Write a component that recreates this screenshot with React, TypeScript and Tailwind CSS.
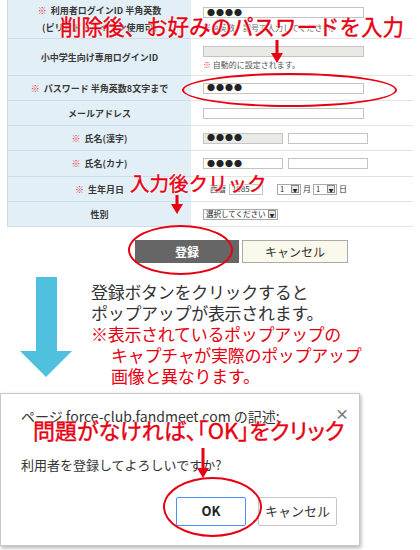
const red = "text-[#e60012]";

function Dots() {
  return <span className="pl-[3px] text-[8px] leading-none tracking-[1px] text-[#222]">●●●●</span>;
}

function Field({ w, filled, gray, children }: { w: string; filled?: boolean; gray?: boolean; children?: React.ReactNode }) {
  return (
    <div
      className={`${w} flex h-[11px] items-center border border-[#c4c4c4] ${gray ? "bg-[#e9e9e6]" : "bg-white"}`}
    >
      {filled ? <Dots /> : children}
    </div>
  );
}

function Select({ label, w }: { label: string; w: string }) {
  return (
    <div className={`${w} flex h-[11px] items-center justify-between overflow-hidden whitespace-nowrap border border-[#a8a8a8] bg-white pl-[2px] text-[7.5px] leading-none text-[#222]`}>
      <span>{label}</span>
      <span className="mr-[1px] flex h-[8px] w-[8px] shrink-0 items-center justify-center border border-[#888] bg-[#e6e6e6] text-[5px]">▼</span>
    </div>
  );
}

function Label({ req, children, h }: { req?: boolean; children: React.ReactNode; h: string }) {
  return (
    <div className={`${h} flex items-center justify-center border-b border-[#cadde8] bg-[#e2eff6] text-center text-[9px] font-bold leading-[17px] text-[#3a3a3a]`}>
      <div>
        {req && <span className="mr-[4px] text-[#ec3348]">※</span>}
        {children}
      </div>
    </div>
  );
}

function Cell({ h, children }: { h: string; children?: React.ReactNode }) {
  return <div className={`${h} flex flex-col justify-center border-b border-[#e3e3e3] bg-white pl-[12px]`}>{children}</div>;
}

function Ellipse({ className }: { className: string }) {
  return <div className={`pointer-events-none absolute rounded-[50%] border-2 border-[#e60012] ${className}`} />;
}

function RedArrow({ className, len }: { className: string; len: number }) {
  return (
    <svg className={`pointer-events-none absolute ${className}`} width="12" height={len} viewBox={`0 0 12 ${len}`}>
      <rect x="4.5" y="0" width="3" height={len - 8} fill="#e60012" />
      <polygon points={`0,${len - 10} 12,${len - 10} 6,${len}`} fill="#e60012" />
    </svg>
  );
}

const note =
  "pointer-events-none absolute whitespace-nowrap leading-none text-[#e60012] [-webkit-text-stroke:0.4px_#e60012] [text-shadow:0_0_2px_#fff,0_0_2px_#fff,0_0_3px_#fff]";

export default function App() {
  return (
    <div className="relative h-[550px] w-[420px] overflow-hidden bg-white font-['Noto_Sans_CJK_JP',sans-serif]">
      {/* form table */}
      <div className="ml-[7px] grid w-[405px] grid-cols-[183px_222px] border-x border-[#d6d6d6]">
        <Label h="h-[39px]" req>
          利用者ログインID 半角英数
          <br />
          (ピリオド・ハイフン使用可)
        </Label>
        <Cell h="h-[39px] !justify-start pt-[7px]">
          <Field w="w-[161px]" filled />
          <div className="mt-[6px] text-[8px] leading-none text-[#666]">半角英数・記号で入力してください。</div>
        </Cell>

        <Label h="h-[37px]">小中学生向け専用ログインID</Label>
        <Cell h="h-[37px] !justify-start pt-[7px]">
          <Field w="w-[161px]" gray />
          <div className="mt-[4px] text-[8px] leading-none text-[#555]">
            <span className="text-[#ec3348]">※</span> 自動的に設定されます。
          </div>
        </Cell>

        <Label h="h-[25px]" req>
          パスワード 半角英数8文字まで
        </Label>
        <Cell h="h-[25px]">
          <Field w="w-[161px]" filled />
        </Cell>

        <Label h="h-[25px]">メールアドレス</Label>
        <Cell h="h-[25px]">
          <Field w="w-[161px]" />
        </Cell>

        <Label h="h-[25px]" req>
          氏名(漢字)
        </Label>
        <Cell h="h-[25px]">
          <div className="flex gap-[5px]">
            <Field w="w-[80px]" filled gray />
            <Field w="w-[80px]" />
          </div>
        </Cell>

        <Label h="h-[26px]" req>
          氏名(カナ)
        </Label>
        <Cell h="h-[26px]">
          <div className="flex gap-[5px]">
            <Field w="w-[80px]" filled />
            <Field w="w-[80px]" />
          </div>
        </Cell>

        <Label h="h-[25px]" req>
          生年月日
        </Label>
        <Cell h="h-[25px]">
          <div className="flex items-center text-[8px] leading-none text-[#333]">
            <span className="mr-[3px] w-[23px] text-right">西暦</span>
            <Field w="w-[34px]">
              <span className="pl-[2px] text-[8px] text-[#333]">1985</span>
            </Field>
            <span className="w-[14px]" />
            <Select label="1" w="w-[24px]" />
            <span className="px-[2px]">月</span>
            <Select label="1" w="w-[24px]" />
            <span className="px-[2px]">日</span>
          </div>
        </Cell>

        <Label h="h-[25px]">性別</Label>
        <Cell h="h-[25px]">
          <Select label="選択してください" w="w-[75px]" />
        </Cell>
      </div>

      {/* buttons */}
      <div className="ml-[135px] mt-[13px] flex gap-[3px]">
        <div className="flex h-[23px] w-[104px] items-center justify-center bg-[#666] text-[12px] font-bold text-white">登録</div>
        <div className="flex h-[23px] w-[106px] items-center justify-center border border-[#aaa] bg-[#fbf9ec] text-[12px] text-[#333]">
          キャンセル
        </div>
      </div>

      {/* explanation */}
      <div className="mt-[14px] flex">
        <svg className="ml-[20px] shrink-0" width="52" height="100" viewBox="0 0 52 100">
          <rect x="16" y="0" width="21" height="76" fill="#4fc1de" />
          <polygon points="0,74 52,74 26,100" fill="#4fc1de" />
        </svg>
        <div className="ml-[19px] pt-[4px] text-[17px] leading-[21px] tracking-[-0.3px]">
          <div className="text-[#333]">登録ボタンをクリックすると</div>
          <div className="text-[#333]">ポップアップが表示されます。</div>
          <div className={red}>※表示されているポップアップの</div>
          <div className={`pl-[20px] ${red}`}>キャプチャが実際のポップアップ</div>
          <div className={`pl-[20px] ${red}`}>画像と異なります。</div>
        </div>
      </div>

      {/* dialog capture */}
      <div className="mt-[7px] flex h-[153px] w-[360px] flex-col border border-[#c8c8c8] bg-white shadow-[1px_2px_4px_rgba(0,0,0,0.3)]">
        <div className="flex items-start justify-between pl-[20px] pr-[10px] pt-[12px]">
          <span className="text-[14px] text-[#333]">ページ force-club.fandmeet.com の記述:</span>
          <span className="text-[14px] font-bold leading-none text-[#777]">×</span>
        </div>
        <div className="mt-[28px] pl-[20px] text-[13px] text-[#333]">利用者を登録してよろしいですか?</div>
        <div className="mt-[22px] flex justify-end gap-[12px] pr-[22px]">
          <div className="flex h-[29px] w-[70px] items-center justify-center rounded-[2px] border border-[#4d90fe] bg-white text-[13px] font-bold text-[#222]">
            OK
          </div>
          <div className="flex h-[29px] w-[79px] items-center justify-center rounded-[2px] border border-[#c6c6c6] bg-white text-[13px] text-[#333]">
            キャンセル
          </div>
        </div>
      </div>

      {/* annotations */}
      <div className={`${note} left-[60px] top-[15px] text-[21.5px]`}>削除後、お好みのパスワードを入力</div>
      <RedArrow className="left-[271px] top-[40px]" len={23} />
      <Ellipse className="left-[182px] top-[73px] h-[34px] w-[215px]" />

      <div className={`${note} left-[130px] top-[173px] text-[19.5px]`}>入力後クリック</div>
      <RedArrow className="left-[171px] top-[195px]" len={19} />
      <Ellipse className="left-[128px] top-[225px] h-[50px] w-[105px]" />

      <div className={`${note} left-[33px] top-[418px] text-[22px] [font-feature-settings:'palt']`}>問題がなければ、「OK」をクリック</div>
      <RedArrow className="left-[197px] top-[448px]" len={30} />
      <Ellipse className="left-[163px] top-[477px] h-[60px] w-[99px]" />
    </div>
  );
}
